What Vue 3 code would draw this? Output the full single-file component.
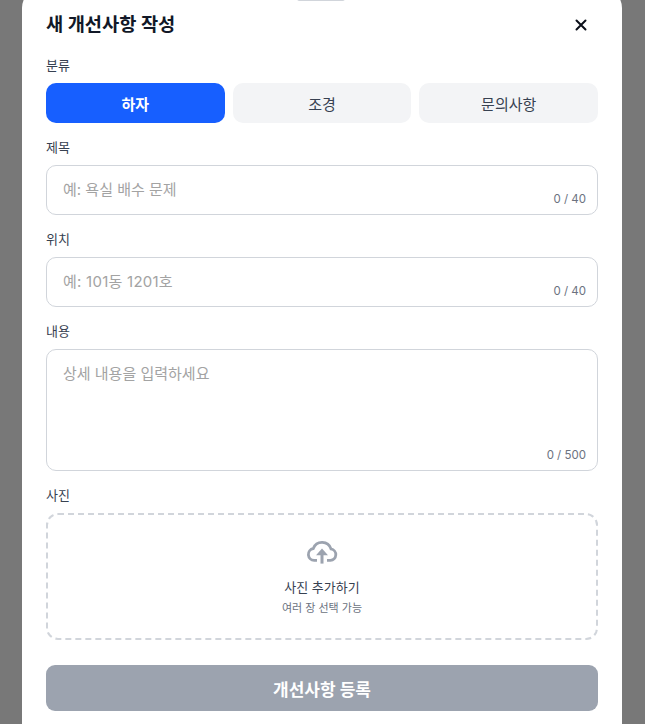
<script setup>
const tabs = [
  { label: '하자', active: true },
  { label: '조경', active: false },
  { label: '문의사항', active: false },
]
const fields = [
  { label: '제목', placeholder: '예: 욕실 배수 문제', count: '0 / 40', tall: false, digits: false },
  { label: '위치', placeholder: '예: 101동 1201호', count: '0 / 40', tall: false, digits: true },
  { label: '내용', placeholder: '상세 내용을 입력하세요', count: '0 / 500', tall: true, digits: false },
]
</script>

<template>
  <div class="backdrop">
    <section class="modal">
      <div class="handle"></div>
      <header class="head">
        <h1>새 개선사항 작성</h1>
        <button class="close" aria-label="닫기">
          <svg width="24" height="24" viewBox="0 0 24 24" fill="none" stroke="#0b0f19" stroke-width="2" stroke-linecap="round">
            <path d="M7.5 7.5l9 9M16.5 7.5l-9 9" />
          </svg>
        </button>
      </header>

      <div class="group">
        <div class="label">분류</div>
        <div class="tabs">
          <button v-for="t in tabs" :key="t.label" class="tab" :class="{ active: t.active }">{{ t.label }}</button>
        </div>
      </div>

      <div v-for="f in fields" :key="f.label" class="group">
        <div class="label">{{ f.label }}</div>
        <div class="input" :class="{ tall: f.tall }">
          <span class="ph" :class="{ digits: f.digits }">{{ f.placeholder }}</span>
          <span class="count">{{ f.count }}</span>
        </div>
      </div>

      <div class="group">
        <div class="label">사진</div>
        <div class="drop">
          <svg width="32" height="24" viewBox="0 0 32 24" fill="none" stroke="#9ca3af" stroke-width="2.8">
            <path d="M11 20.4H8.2a6 6 0 0 1-.9-11.9A9.4 9.4 0 0 1 25 8.9a5.8 5.8 0 0 1-.6 11.5H21" />
            <path d="M16 23.6V13" stroke-width="3" />
            <path d="M16 8.6l6 6.6H10z" fill="#9ca3af" stroke="none" />
          </svg>
          <div class="drop-title">사진 추가하기</div>
          <div class="drop-sub">여러 장 선택 가능</div>
        </div>
      </div>

      <button class="submit">개선사항 등록</button>
    </section>
  </div>
</template>

<style scoped>
.backdrop {
  height: 724px;
  overflow: hidden;
  background: #787878;
  display: flex;
  justify-content: center;
  font-family: Inter, "Noto Sans CJK KR", sans-serif;
}
.modal {
  width: 600px;
  height: 760px;
  margin-top: -12px;
  margin-right: 1px;
  background: #fff;
  border-radius: 20px;
  padding: 0 24px;
  box-sizing: border-box;
  position: relative;
  display: flex;
  flex-direction: column;
}
.handle {
  position: absolute;
  top: 8px;
  left: 275px;
  width: 48px;
  height: 5px;
  border-radius: 3px;
  background: #d1d5db;
}
.head {
  height: 67px;
  flex: none;
  padding-top: 23px;
  box-sizing: border-box;
  display: flex;
  align-items: flex-start;
  justify-content: space-between;
}
h1 {
  margin: 0;
  font-size: 18.72px;
  line-height: 28px;
  font-weight: 700;
  color: #111827;
}
.close {
  width: 24px;
  height: 24px;
  padding: 0;
  margin: 2px 5px 0 0;
  border: 0;
  background: none;
  display: flex;
}
.group {
  margin-bottom: 14px;
}
.label {
  font-size: 13px;
  line-height: 20px;
  font-weight: 400;
  color: #374151;
  margin-bottom: 8px;
}
.tabs {
  display: flex;
  gap: 8px;
}
.tab {
  flex: 1;
  height: 40px;
  border: 0;
  border-radius: 10px;
  background: #f3f4f6;
  color: #374151;
  font: 400 15px Inter, "Noto Sans CJK KR", sans-serif;
}
.tab.active {
  background: #175fff;
  color: #fff;
  font-weight: 700;
}
.input {
  height: 50px;
  border: 1px solid #d1d5db;
  border-radius: 10px;
  box-sizing: border-box;
  padding: 12px 16px;
  position: relative;
  background: #fff;
}
.input.tall {
  height: 122px;
}
.ph {
  font-size: 15px;
  line-height: 24px;
  color: #a3a3a3;
  display: block;
}
.ph.digits {
  letter-spacing: 0.25px;
}
.count {
  position: absolute;
  right: 11px;
  bottom: 8px;
  font-size: 11.5px;
  line-height: 14px;
  color: #6b7280;
}
.drop {
  height: 127px;
  margin-top: 1px;
  border: 2px dashed #d1d5db;
  border-radius: 12px;
  box-sizing: border-box;
  display: flex;
  flex-direction: column;
  align-items: center;
  padding-top: 25px;
}
.drop-title {
  font-size: 13px;
  line-height: 18px;
  font-weight: 400;
  color: #374151;
  margin-top: 14px;
}
.drop-sub {
  font-size: 11px;
  line-height: 16px;
  color: #6b7280;
  margin-top: 4px;
}
.submit {
  height: 46px;
  flex: none;
  margin-top: 11px;
  border: 0;
  border-radius: 9px;
  background: #9ca3af;
  color: #fff;
  font: 700 17px Inter, "Noto Sans CJK KR", sans-serif;
}
</style>
